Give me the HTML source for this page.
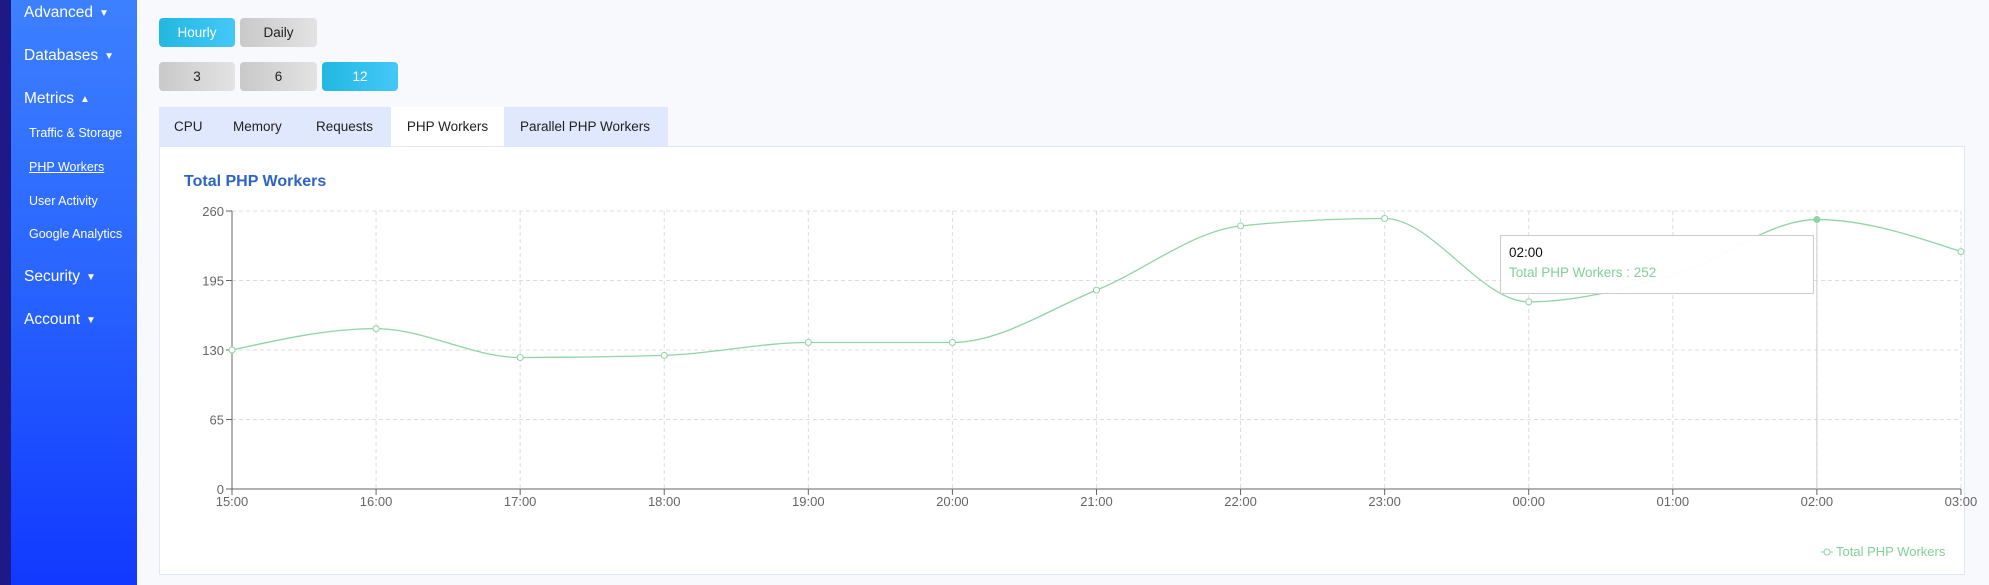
<!DOCTYPE html>
<html><head><meta charset="utf-8">
<style>
*{margin:0;padding:0;box-sizing:border-box}
body{width:1989px;height:585px;overflow:hidden;background:#f8f9fd;font-family:"Liberation Sans",sans-serif;position:relative}
.strip{position:absolute;left:0;top:0;width:11px;height:585px;background:#1d1a87}
.side{position:absolute;left:11px;top:0;width:126px;height:585px;background:linear-gradient(#3d80ff,#2a66ff 45%,#1139ff)}
.side div{position:absolute;color:#fff;white-space:nowrap}
.side i{font-style:normal;font-size:10px;margin-left:6px;vertical-align:1px}
.m{left:13px;font-size:15.5px}
.s{left:18px;font-size:12.5px}
.btn{position:absolute;height:29px;border-radius:4px;font-size:13.5px;text-align:center;line-height:29px;color:#222}
.g{background:linear-gradient(90deg,#c9c9c9,#e3e3e3)}
.b{background:linear-gradient(90deg,#22b8e0,#44c7f9);color:#fff}
.tabs{position:absolute;left:159px;top:107px;width:509px;height:39px;background:#e0e8fd}
.tab{position:absolute;top:0;height:39px;line-height:39px;font-size:13.5px;color:#222}
.panel{position:absolute;left:159px;top:146px;width:1806px;height:429px;background:#fff;border:1px solid #dfe6f5}
</style></head><body>
<div class="strip"></div>
<div class="side">
<div class="m" style="top:4px">Advanced<i>▼</i></div>
<div class="m" style="top:47px">Databases<i>▼</i></div>
<div class="m" style="top:90px">Metrics<i>▲</i></div>
<div class="s" style="top:126px">Traffic &amp; Storage</div>
<div class="s" style="top:160px;text-decoration:underline">PHP Workers</div>
<div class="s" style="top:194px">User Activity</div>
<div class="s" style="top:227px">Google Analytics</div>
<div class="m" style="top:268px">Security<i>▼</i></div>
<div class="m" style="top:311px">Account<i>▼</i></div>
</div>
<div class="btn b" style="left:159px;top:18px;width:76px">Hourly</div>
<div class="btn g" style="left:240px;top:18px;width:77px">Daily</div>
<div class="btn g" style="left:159px;top:62px;width:76px">3</div>
<div class="btn g" style="left:240px;top:62px;width:77px">6</div>
<div class="btn b" style="left:322px;top:62px;width:76px">12</div>
<div class="tabs">
<div class="tab" style="left:15px">CPU</div>
<div class="tab" style="left:74px">Memory</div>
<div class="tab" style="left:157px">Requests</div>
<div class="tab" style="left:232px;width:113px;background:#fff;text-align:center">PHP Workers</div>
<div class="tab" style="left:361px">Parallel PHP Workers</div>
</div>
<div class="panel"></div>
<svg style="position:absolute;left:0;top:0" width="1989" height="585" id="sv">
<text x="184" y="186" font-family="Liberation Sans" font-weight="bold" font-size="16" fill="#2f63c9">Total PHP Workers</text>
</svg>
<script>
var s=document.getElementById('sv'),h='';
var x0=232,dx=144.08,y0=489,k=278/260;
for(var i=0;i<=12;i++){var x=x0+i*dx;if(i>0)h+='<line x1="'+x+'" y1="211" x2="'+x+'" y2="489" stroke="#ddd" stroke-dasharray="4,3"/>';}
var lb=['0','65','130','195','260'];
for(var j=0;j<5;j++){var y=y0-j*69.5;if(j>0)h+='<line x1="232" y1="'+y+'" x2="1961" y2="'+y+'" stroke="#ddd" stroke-dasharray="4,3"/>';
h+='<line x1="226" y1="'+y+'" x2="232" y2="'+y+'" stroke="#666"/><text x="224" y="'+(y+5)+'" text-anchor="end" font-size="13" fill="#666" font-family="Liberation Sans">'+lb[j]+'</text>';}
h+='<line x1="232" y1="211" x2="232" y2="489" stroke="#666"/><line x1="232" y1="489" x2="1961" y2="489" stroke="#666"/>';
var t=['15:00','16:00','17:00','18:00','19:00','20:00','21:00','22:00','23:00','00:00','01:00','02:00','03:00'];
for(var i=0;i<13;i++){var x=x0+i*dx;h+='<line x1="'+x+'" y1="489" x2="'+x+'" y2="495" stroke="#666"/><text x="'+x+'" y="506" text-anchor="middle" font-size="13" fill="#666" font-family="Liberation Sans">'+t[i]+'</text>';}
h+='<line x1="'+(x0+11*dx)+'" y1="219" x2="'+(x0+11*dx)+'" y2="489" stroke="#ccc"/>';
var v=[130,150,123,125,137,137,186,246,253,175,200,252,222];
var p=v.map(function(a,i){return [x0+i*dx,y0-a*k]});
var n=p.length,sl=[],m=[];
for(var i=0;i<n-1;i++)sl.push((p[i+1][1]-p[i][1])/dx);
function sg(a){return a<0?-1:a>0?1:0}
for(var i=1;i<n-1;i++){var s0=sl[i-1],s1=sl[i],pp=(s0+s1)/2;m[i]=(sg(s0)+sg(s1))*Math.min(Math.abs(s0),Math.abs(s1),0.5*Math.abs(pp))||0;}
m[0]=(3*sl[0]-m[1])/2;m[n-1]=(3*sl[n-2]-m[n-2])/2;
var d='M'+p[0][0]+','+p[0][1];
for(var i=0;i<n-1;i++){var a=p[i],b=p[i+1];
d+=' C'+(a[0]+dx/3)+','+(a[1]+m[i]*dx/3)+' '+(b[0]-dx/3)+','+(b[1]-m[i+1]*dx/3)+' '+b[0]+','+b[1];}
h+='<path d="'+d+'" fill="none" stroke="#8fd4a4" stroke-width="1.3"/>';
p.forEach(function(q,i){h+='<circle cx="'+q[0]+'" cy="'+q[1]+'" r="3" fill="'+(i==11?'#8fd4a4':'#fff')+'" stroke="#8fd4a4"/>';});
h+='<rect x="1500.5" y="235.5" width="313" height="58" fill="#fff" fill-opacity="0.95" stroke="#ccc"/>';
h+='<text x="1509" y="257" font-size="13.5" fill="#111" font-family="Liberation Sans">02:00</text>';
h+='<text x="1509" y="277" font-size="13.5" fill="#82cf98" font-family="Liberation Sans">Total PHP Workers : 252</text>';
h+='<line x1="1821" y1="552" x2="1833" y2="552" stroke="#8fd4a4"/><circle cx="1827" cy="552" r="3" fill="#fff" stroke="#8fd4a4"/>';
h+='<text x="1836" y="556" font-size="13" fill="#82cf98" font-family="Liberation Sans">Total PHP Workers</text>';
s.insertAdjacentHTML('beforeend',h);
</script>
</body></html>
